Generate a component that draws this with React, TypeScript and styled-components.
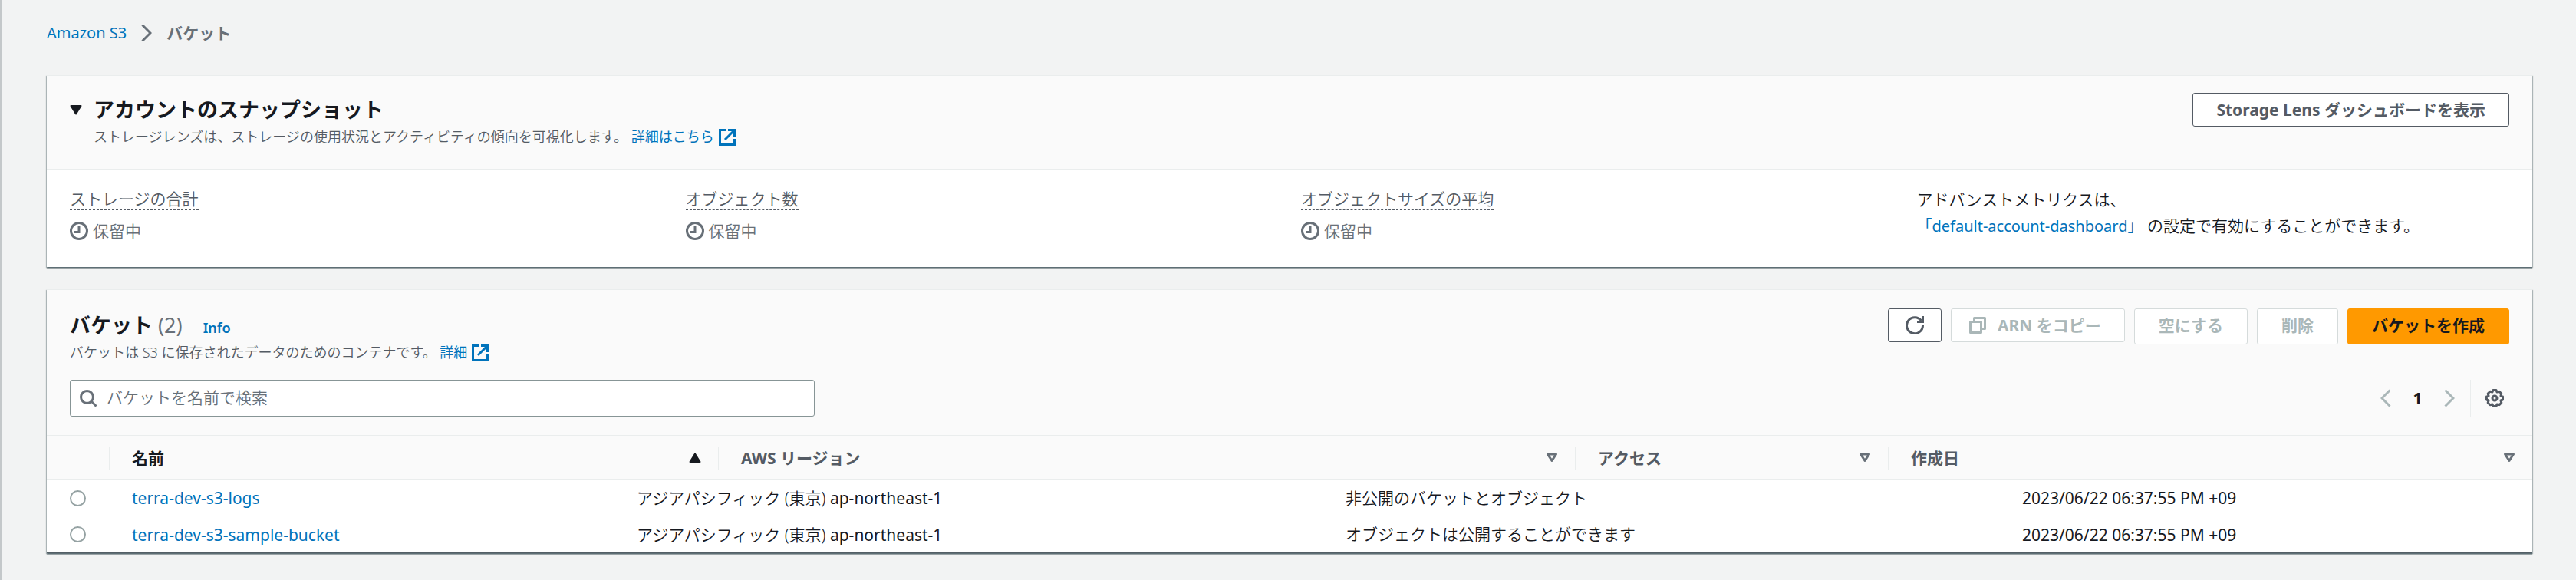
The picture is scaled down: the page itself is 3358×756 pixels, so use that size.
import React from 'react';
import styled, { createGlobalStyle, css } from 'styled-components';

const GlobalStyle = createGlobalStyle`
  *, *::before, *::after { box-sizing: border-box; }
  body {
    margin: 0;
    background: #f2f3f3;
    color: #16191f;
    font-family: "Noto Sans", "Noto Sans CJK JP", sans-serif;
    font-size: 21px;
    line-height: 34px;
  }
  button, input { font: inherit; color: inherit; }
`;

const Page = styled.main`
  min-height: 100vh;
  padding: 24px 57px 36px 59px;
  border-left: 2px solid #c4c8ca;
`;

const Breadcrumbs = styled.nav`
  display: flex;
  align-items: center;
  gap: 19px;
  height: 38px;
  margin-bottom: 36px;
  color: #687078;
  font-weight: 700;
`;

const Link = styled.a<{ $small?: boolean }>`
  color: #0073bb;
  font-weight: 400;
  font-size: ${(p) => (p.$small ? '20px' : 'inherit')};
  text-decoration: none;
  &:hover { text-decoration: underline; }
  svg { margin: -4px 0 -4px 6px; vertical-align: -1px; }
`;

const Card = styled.section`
  margin-bottom: 29px;
  background: #fff;
  border-top: 1px solid #eaeded;
  box-shadow: 0 2px 1px 0 rgba(0, 28, 36, 0.3), 1px 1px 1px 0 rgba(0, 28, 36, 0.25),
    -1px 1px 1px 0 rgba(0, 28, 36, 0.25);
`;

const CardHeader = styled.header`
  display: flex;
  justify-content: space-between;
  align-items: flex-start;
  padding: 22px 30px 29px;
  background: #fafafa;
  border-bottom: 1px solid #eaeded;
`;

const TitleGroup = styled.div`
  display: grid;
  grid-template-columns: auto auto;
  justify-content: start;
  align-items: center;
  column-gap: 15px;
`;

const Toggle = styled.button`
  display: flex;
  padding: 0;
  border: 0;
  background: none;
  cursor: pointer;
`;

const Title = styled.h2`
  margin: 0;
  font-size: 27px;
  line-height: 44px;
  font-weight: 700;
`;

const Count = styled.span`
  margin-left: 7px;
  color: #687078;
  font-weight: 400;
`;

const InfoLink = styled.a`
  margin-left: 27px;
  color: #0073bb;
  font-size: 18px;
  line-height: 24px;
  font-weight: 600;
  text-decoration: none;
`;

const Description = styled.p`
  grid-column: -2 / -1;
  margin: 0;
  color: #545b64;
  font-size: 18px;
  line-height: 26px;
  font-weight: 350;
`;

type Kind = 'normal' | 'primary';
const Button = styled.button<{ $kind?: Kind; $compact?: boolean }>`
  display: flex;
  align-items: center;
  justify-content: center;
  gap: 15px;
  height: ${(p) => (p.$compact ? '44px' : '47px')};
  padding: 0 31px 3px;
  border: 1px solid #545b64;
  border-radius: 3px;
  background: #fff;
  color: #545b64;
  font-weight: 700;
  white-space: nowrap;
  cursor: pointer;
  &:disabled { color: #aab7b8; border-color: #d5dbdb; cursor: default; }
  ${(p) => p.$compact && css`padding: 0 30px;`}
  ${(p) =>
    p.$kind === 'primary' &&
    css`
      background: #f90;
      border-color: #f90;
      color: #16191f;
    `}
`;

const IconOnly = styled(Button)`
  padding: 0 22px;
`;

const CopyButton = styled(Button)`
  padding: 0 30px 0 23px;
`;

const Actions = styled.div`
  display: flex;
  align-items: flex-start;
  gap: 12px;
`;

const Metrics = styled.div`
  display: grid;
  grid-template-columns: repeat(4, minmax(0, 1fr));
  gap: 30px;
  padding: 22px 30px 30px;
`;

const Hint = styled.span`
  display: inline-block;
  line-height: 28px;
  border-bottom: 1px dashed currentColor;
`;

const MetricLabel = styled.div`
  display: flex;
  padding-top: 2px;
  color: #545b64;
  font-weight: 350;
`;

const Status = styled.div`
  display: flex;
  align-items: center;
  gap: 6px;
  margin-top: 10px;
  color: #687078;
  font-weight: 350;
`;

const Note = styled.p`
  margin: 0;
  font-weight: 350;
`;

const BucketHeader = styled.header`
  padding: 24px 30px;
  background: #fafafa;
  border-bottom: 1px solid #eaeded;
`;

const Row = styled.div`
  display: flex;
  justify-content: space-between;
  align-items: flex-start;
`;

const ToolRow = styled(Row)`
  align-items: center;
  margin-top: 23px;
`;

const SearchBox = styled.label`
  display: flex;
  align-items: center;
  gap: 12px;
  flex: 0 1 971px;
  height: 48px;
  padding: 0 12px;
  background: #fff;
  border: 1px solid #879596;
  border-radius: 3px;
`;

const SearchInput = styled.input`
  flex: 1;
  min-width: 0;
  padding: 0 0 2px;
  border: 0;
  outline: 0;
  background: none;
  font-weight: 350;
  &::placeholder { color: #687078; opacity: 1; }
`;

const Pager = styled.div`
  display: flex;
  align-items: center;
  height: 48px;
`;

const PagerButton = styled.button`
  display: flex;
  justify-content: center;
  width: 40px;
  padding: 0;
  border: 0;
  background: none;
  color: #aab7b8;
`;

const PageNumber = styled.button`
  width: 43px;
  padding: 0;
  border: 0;
  background: none;
  font-weight: 700;
`;

const Settings = styled.button`
  display: flex;
  align-items: center;
  height: 48px;
  margin-left: 7px;
  padding: 0 7px 0 19px;
  border: 0;
  border-left: 1px solid #eaeded;
  background: none;
  color: #545b64;
`;

const Table = styled.table`
  display: block;
  width: 100%;
`;

const Head = styled.thead`
  display: block;
  background: #fafafa;
`;

const Body = styled.tbody`
  display: block;
`;

const HeadRow = styled.tr`
  display: grid;
  grid-template-columns: 81px 794fr 1117fr 408fr 840fr;
  align-items: center;
  height: 57px;
`;

const BodyRow = styled.tr`
  display: grid;
  grid-template-columns: 81px 658fr 924fr 882fr 695fr;
  align-items: center;
  height: 47px;
  border-top: 1px solid #eaeded;
  &:last-child {
    height: 49px;
    border-bottom: 1px solid #545f66;
  }
`;

const Th = styled.th<{ $active?: boolean }>`
  display: flex;
  align-items: center;
  justify-content: space-between;
  height: 30px;
  padding: 0 22px 0 29px;
  border-left: 1px solid #eaeded;
  color: ${(p) => (p.$active ? '#16191f' : '#545b64')};
  text-align: left;
  font-weight: 700;
`;

const Blank = styled.td`
  padding: 0;
`;

const Td = styled.td`
  display: flex;
  align-items: center;
  padding: 0 30px;
  font-weight: 350;
  white-space: nowrap;
`;

const Latin = styled.span`
  font-weight: 400;
`;

const Radio = styled.input`
  appearance: none;
  width: 21px;
  height: 21px;
  margin: 0;
  border: 2px solid #95a2a3;
  border-radius: 50%;
  background: #fff;
  &:checked { border: 6px solid #0073bb; }
`;

const External = () => (
  <svg width="22" height="22" viewBox="0 0 22 22" fill="none" stroke="#0073bb" strokeWidth="3" aria-hidden="true">
    <path d="M9 1.500H1.500V20.500H20.500V13M12 1.500H20.500V10M20 2L8 14" />
  </svg>
);

const Clock = () => (
  <svg width="24" height="24" viewBox="0 0 24 24" fill="none" stroke="#687078" strokeWidth="3" aria-hidden="true">
    <circle cx="12" cy="12" r="10.500" />
    <path d="M12 6V13.500H6" />
  </svg>
);

const Chevron = ({ left }: { left?: boolean }) => (
  <svg width="14" height="24" viewBox="0 0 14 24" fill="none" stroke="currentColor" strokeWidth="3" aria-hidden="true">
    <path d={left ? 'M12.500 1.500L2 12L12.500 22.500' : 'M1.500 1.500L12 12L1.500 22.500'} />
  </svg>
);

const CaretDown = () => (
  <svg width="16" height="13" viewBox="0 0 16 13" aria-hidden="true">
    <path d="M1.500 1H14.500L8 11.500Z" fill="#16191f" stroke="#16191f" strokeWidth="2" strokeLinejoin="round" />
  </svg>
);

const SortUp = () => (
  <svg width="16" height="13" viewBox="0 0 16 13" aria-hidden="true">
    <path d="M1.500 12H14.500L8 1.500Z" fill="#16191f" stroke="#16191f" strokeWidth="2" strokeLinejoin="round" />
  </svg>
);

const SortDown = () => (
  <svg width="16" height="13" viewBox="0 0 16 13" aria-hidden="true">
    <path d="M2.500 2H13.500L8 10.500Z" fill="none" stroke="#687078" strokeWidth="3" strokeLinejoin="round" />
  </svg>
);

const Refresh = () => (
  <svg width="24" height="24" viewBox="0 0 24 24" fill="none" stroke="currentColor" strokeWidth="3" aria-hidden="true">
    <path d="M22.500 12A10.500 10.500 0 1 1 20.500 6M22.500 0V7.500H15" />
  </svg>
);

const Copy = () => (
  <svg width="22" height="22" viewBox="0 0 22 22" fill="none" stroke="currentColor" strokeWidth="3" strokeLinejoin="round" aria-hidden="true">
    <path d="M1.500 6.500H15.500V20.500H1.500Z" />
    <path d="M6.500 6V1.500H20.500V15.500H16" />
  </svg>
);

const Magnifier = () => (
  <svg width="23" height="23" viewBox="0 0 23 23" fill="none" stroke="#687078" strokeWidth="3" aria-hidden="true">
    <circle cx="9.500" cy="9.500" r="8" />
    <path d="M15 15L21.500 21.500" />
  </svg>
);

const Gear = () => (
  <svg width="24" height="24" viewBox="0 0 24 24" fill="none" stroke="currentColor" strokeWidth="3" strokeLinejoin="round" aria-hidden="true">
    <path d="M10 1.500H14L15 4L18 3.200L20.800 6L20 9L22.500 10V14L20 15L20.800 18L18 20.800L15 20L14 22.500H10L9 20L6 20.800L3.200 18L4 15L1.500 14V10L4 9L3.200 6L6 3.200L9 4Z" />
    <circle cx="12" cy="12" r="3" />
  </svg>
);

const metrics = ['ストレージの合計', 'オブジェクト数', 'オブジェクトサイズの平均'];

const buckets = [
  { name: 'terra-dev-s3-logs', access: '非公開のバケットとオブジェクト' },
  { name: 'terra-dev-s3-sample-bucket', access: 'オブジェクトは公開することができます' },
];

export default function App() {
  return (
    <>
      <GlobalStyle />
      <Page>
        <Breadcrumbs aria-label="breadcrumb">
          <Link href="#s3" $small>Amazon S3</Link>
          <Chevron />
          <span>バケット</span>
        </Breadcrumbs>

        <Card>
          <CardHeader>
            <TitleGroup>
              <Toggle aria-label="アカウントのスナップショット" aria-expanded="true">
                <CaretDown />
              </Toggle>
              <Title>アカウントのスナップショット</Title>
              <Description>
                ストレージレンズは、ストレージの使用状況とアクティビティの傾向を可視化します。{' '}
                <Link href="#lens">詳細はこちら<External /></Link>
              </Description>
            </TitleGroup>
            <Button $compact>Storage Lens ダッシュボードを表示</Button>
          </CardHeader>
          <Metrics>
            {metrics.map((label) => (
              <div key={label}>
                <MetricLabel><Hint>{label}</Hint></MetricLabel>
                <Status><Clock />保留中</Status>
              </div>
            ))}
            <Note>
              アドバンストメトリクスは、
              <br />
              <Link href="#dashboard" $small>「default-account-dashboard」</Link>{' '}
              の設定で有効にすることができます。
            </Note>
          </Metrics>
        </Card>

        <Card>
          <BucketHeader>
            <Row>
              <div>
                <Title>
                  バケット<Count>(2)</Count>
                  <InfoLink href="#info">Info</InfoLink>
                </Title>
                <Description>
                  バケットは S3 に保存されたデータのためのコンテナです。{' '}
                  <Link href="#more">詳細<External /></Link>
                </Description>
              </div>
              <Actions>
                <IconOnly $compact aria-label="更新"><Refresh /></IconOnly>
                <CopyButton $compact disabled><Copy />ARN をコピー</CopyButton>
                <Button disabled>空にする</Button>
                <Button disabled>削除</Button>
                <Button $kind="primary">バケットを作成</Button>
              </Actions>
            </Row>
            <ToolRow>
              <SearchBox>
                <Magnifier />
                <SearchInput type="text" aria-label="バケットを名前で検索" placeholder="バケットを名前で検索" />
              </SearchBox>
              <Pager>
                <PagerButton aria-label="前へ"><Chevron left /></PagerButton>
                <PageNumber>1</PageNumber>
                <PagerButton aria-label="次へ"><Chevron /></PagerButton>
                <Settings aria-label="設定"><Gear /></Settings>
              </Pager>
            </ToolRow>
          </BucketHeader>
          <Table>
            <Head>
              <HeadRow>
                <Blank />
                <Th $active scope="col">名前<SortUp /></Th>
                <Th scope="col">AWS リージョン<SortDown /></Th>
                <Th scope="col">アクセス<SortDown /></Th>
                <Th scope="col">作成日<SortDown /></Th>
              </HeadRow>
            </Head>
            <Body>
              {buckets.map((b) => (
                <BodyRow key={b.name}>
                  <Td><Radio type="radio" name="bucket" aria-label={b.name} /></Td>
                  <Td><Link href={`#${b.name}`}>{b.name}</Link></Td>
                  <Td><span>アジアパシフィック (東京) <Latin>ap-northeast-1</Latin></span></Td>
                  <Td><Hint>{b.access}</Hint></Td>
                  <Td><Latin>2023/06/22 06:37:55 PM +09</Latin></Td>
                </BodyRow>
              ))}
            </Body>
          </Table>
        </Card>
      </Page>
    </>
  );
}
